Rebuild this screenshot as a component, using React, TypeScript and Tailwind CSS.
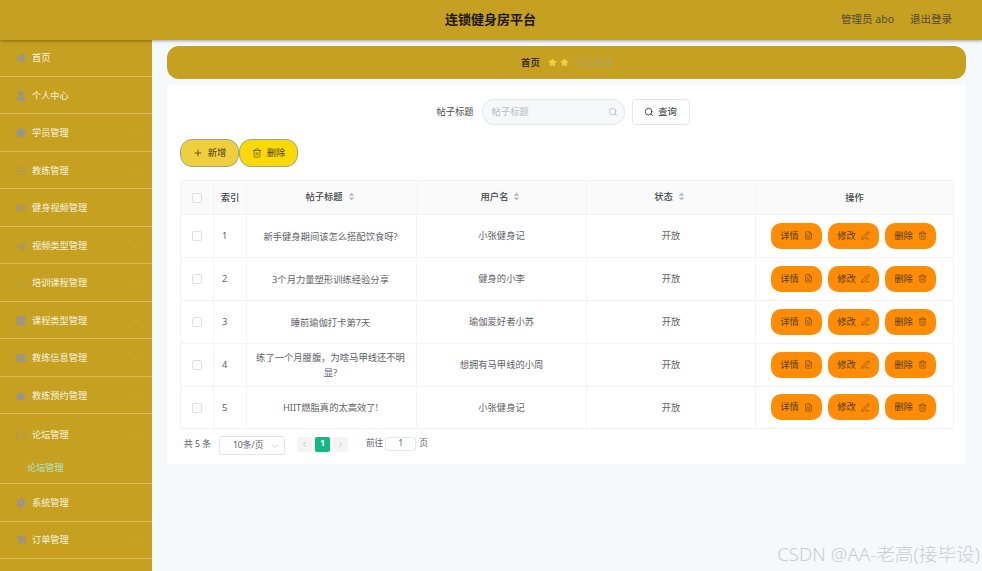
import { Plus, Trash2, Search, ChevronDown, ChevronLeft, ChevronRight, ChevronUp, FileText, PenLine, Star } from 'lucide-react'
import {
  FaHome, FaUser, FaComment, FaBars, FaVideo, FaPaperPlane, FaRegFolder, FaBook, FaIdCard, FaCloud, FaRegCommentDots, FaCog, FaShoppingCart,
} from 'react-icons/fa'

const MENU = [
  { icon: FaHome, label: '首页', tone: 'text-[#98948f]', height: 'h-[36.5px]' },
  { icon: FaUser, label: '个人中心', tone: 'text-[#98948f]', height: 'h-[37.5px] pt-[2px]', arrow: true },
  { icon: FaComment, label: '学员管理', tone: 'text-[#98948f]', height: 'h-[37.5px] pt-[2px]', arrow: true },
  { icon: FaBars, label: '教练管理', tone: 'text-[#b09a4a]', height: 'h-[37.5px] pt-[2px]', arrow: true },
  { icon: FaVideo, label: '健身视频管理', tone: 'text-[#a89a5c]', height: 'h-[37.5px] pt-[2px]', arrow: true },
  { icon: FaPaperPlane, label: '视频类型管理', tone: 'text-[#a89a5c]', height: 'h-[37.5px] pt-[2px]', arrow: true },
  { icon: FaRegFolder, label: '培训课程管理', tone: 'text-[#b8a040]', height: 'h-[37.5px] pt-[2px]', arrow: true },
  { icon: FaBook, label: '课程类型管理', tone: 'text-[#98948f]', height: 'h-[37.5px] pt-[2px]', arrow: true },
  { icon: FaIdCard, label: '教练信息管理', tone: 'text-[#98948f]', height: 'h-[37.5px] pt-[2px]', arrow: true },
  { icon: FaCloud, label: '教练预约管理', tone: 'text-[#98948f]', height: 'h-[37.5px] pt-[2px]', arrow: true },
]

const MENU_BOTTOM = [
  { icon: FaCog, label: '系统管理', arrow: false },
  { icon: FaShoppingCart, label: '订单管理', arrow: true },
]

const ROWS = [
  { id: 1, title: '新手健身期间该怎么搭配饮食呀?', user: '小张健身记' },
  { id: 2, title: '3个月力量塑形训练经验分享', user: '健身的小李' },
  { id: 3, title: '睡前瑜伽打卡第7天', user: '瑜伽爱好者小苏' },
  { id: 4, title: '练了一个月腰腹，为啥马甲线还不明显?', user: '想拥有马甲线的小周' },
  { id: 5, title: 'HIIT燃脂真的太高效了!', user: '小张健身记' },
]

const ROW_HEIGHTS = ['h-[43px]', 'h-[43px]', 'h-[43px]', 'h-[43px]', 'h-[42px]']

function SortIcon() {
  return (
    <svg viewBox="0 0 8 10" className="inline-block w-[7px] h-[9px] ml-[5px] align-[-1px] fill-[#b4b7bd]">
      <path d="M4 0.5 7 4H1z" />
      <path d="M4 9.5 1 6h6z" />
    </svg>
  )
}

function Checkbox({ size = 'w-[10px] h-[10px]' }: { size?: string }) {
  return <span className={`block ${size} mx-auto border border-[#dcdfe6] rounded-[2px] bg-white`} />
}

function ActionButton({ label, icon: Icon }: { label: string; icon: typeof FileText }) {
  return (
    <button className="w-[51px] h-[26px] rounded-[10px] bg-[#ff8c07] text-[#54401f] text-[9.3px] flex items-center justify-center gap-[5px]">
      {label}
      <Icon className="w-[9px] h-[9px]" strokeWidth={1.5} />
    </button>
  )
}

export default function App() {
  return (
    <div
      className="relative w-[982px] h-[571px] overflow-hidden bg-[#f6f9fc] flex flex-col"
      style={{ fontFamily: '"Noto Sans", "Noto Sans CJK SC", sans-serif' }}
    >
      {/* Top bar */}
      <header className="relative z-10 h-10 shrink-0 bg-[#c5a021] shadow-[0_1px_3px_rgba(0,0,0,0.35)] flex items-center pl-[445px] pr-[30px]">
        <h1 className="text-[13px] font-bold text-[#1c1505]">连锁健身房平台</h1>
        <div className="ml-auto flex items-center gap-4 text-[10.5px] text-[#4f4a38]">
          <span>管理员 abo</span>
          <span>退出登录</span>
        </div>
      </header>

      <div className="flex flex-1 min-h-0">
        {/* Sidebar */}
        <aside className="w-[152px] shrink-0 bg-[#c5a021] text-[#fbf5e0] text-[9.2px]">
          {MENU.map(({ icon: Icon, label, tone, height, arrow }) => (
            <div key={label} className={`${height} flex items-center pl-4 pr-3 border-b border-[#d6bc62]`}>
              <Icon className={`w-[10px] h-[10px] mr-[6px] ${tone}`} />
              <span>{label}</span>
              {arrow && <ChevronDown className="ml-auto w-2 h-2 text-[#c9ab3a]" />}
            </div>
          ))}
          <div className="h-[70px] border-b border-[#d6bc62]">
            <div className="h-[41px] flex items-center pl-4 pr-3">
              <FaRegCommentDots className="w-[10px] h-[10px] mr-[6px] text-[#a89a5c]" />
              <span>论坛管理</span>
              <ChevronUp className="ml-auto w-2 h-2 text-[#c9ab3a]" />
            </div>
            <div className="h-[26px] flex items-center pl-[27px] text-[#a8e8c8]">论坛管理</div>
          </div>
          {MENU_BOTTOM.map(({ icon: Icon, label, arrow }) => (
            <div key={label} className="h-[37.5px] pt-[1px] flex items-center pl-4 pr-3 border-b border-[#d6bc62]">
              <Icon className="w-[10px] h-[10px] mr-[6px] text-[#98948f]" />
              <span>{label}</span>
              {arrow && <ChevronDown className="ml-auto w-2 h-2 text-[#c9ab3a]" />}
            </div>
          ))}
        </aside>

        {/* Main */}
        <main className="flex-1 min-w-0 pl-[15px] pr-4 pt-[6px]">
          <div className="h-[33px] rounded-xl bg-[#c5a021] flex items-center justify-center text-[9.3px] pl-[1px]">
            <span className="font-bold text-[#3b3010]">首页</span>
            <Star className="ml-2 w-[9px] h-[9px] fill-[#f0cf45] text-[#f0cf45]" />
            <Star className="ml-[3px] w-[9px] h-[9px] fill-[#f0cf45] text-[#f0cf45]" />
            <span className="ml-[7px] text-[#b3a565]">论坛管理</span>
          </div>

          <section className="mt-[6px] h-[379px] bg-white px-[13px] pt-[14px]">
            {/* Search */}
            <div className="flex items-center justify-center h-[26px] text-[9.3px] pr-[7px]">
              <span className="text-[#4d4d4d] mr-2">帖子标题</span>
              <div className="w-[143px] h-[26px] rounded-xl border border-[#e4e7ed] bg-[#f7f8f9] flex items-center pl-[9px] pr-[6px] text-[#b8bcc4]">
                <span>帖子标题</span>
                <Search className="ml-auto w-[10px] h-[10px]" />
              </div>
              <button className="ml-[7px] w-[58px] h-[26px] rounded-[3px] border border-[#e4e7ed] bg-white flex items-center justify-center gap-1 text-[#303133]">
                <Search className="w-[10px] h-[10px]" />
                查询
              </button>
            </div>

            {/* Toolbar */}
            <div className="mt-[14px] flex text-[9.3px] text-[#4f4418]">
              <button className="w-[59px] h-[28px] rounded-xl border border-[#8fae90] bg-[#efcf3e] flex items-center justify-center gap-[5px]">
                <Plus className="w-[10px] h-[10px]" />
                新增
              </button>
              <button className="w-[59px] h-[28px] rounded-xl border border-[#8fae90] bg-[#fbd809] flex items-center justify-center gap-[5px]">
                <Trash2 className="w-[10px] h-[10px]" strokeWidth={1.5} />
                删除
              </button>
            </div>

            {/* Table */}
            <table className="mt-[13px] w-[773px] table-fixed border-collapse text-[9.3px] text-[#5f6266]">
              <colgroup>
                <col className="w-[33px]" />
                <col className="w-[33px]" />
                <col className="w-[170px]" />
                <col className="w-[170px]" />
                <col className="w-[169px]" />
                <col className="w-[198px]" />
              </colgroup>
              <thead>
                <tr className="h-[34px] bg-[#fafafa] text-[#45474b]">
                  <th className="border border-[#f3f4f6]"><Checkbox /></th>
                  <th className="border border-[#f3f4f6] font-medium">索引</th>
                  <th className="border border-[#f3f4f6] font-medium pb-[2px] pr-[3px]">帖子标题<SortIcon /></th>
                  <th className="border border-[#f3f4f6] font-medium pb-[2px] pr-[2px]">用户名<SortIcon /></th>
                  <th className="border border-[#f3f4f6] font-medium pb-[2px] pr-[3px]">状态<SortIcon /></th>
                  <th className="border border-[#f3f4f6] font-medium">操作</th>
                </tr>
              </thead>
              <tbody>
                {ROWS.map((row, i) => (
                  <tr key={row.id} className={ROW_HEIGHTS[i]}>
                    <td className="border border-[#f3f4f6]"><Checkbox /></td>
                    <td className="border border-[#f3f4f6] pl-[8px]">{row.id}</td>
                    <td className="border border-[#f3f4f6] text-center pl-[9px] pr-[11px] leading-[15px]">{row.title}</td>
                    <td className="border border-[#f3f4f6] text-center">{row.user}</td>
                    <td className="border border-[#f3f4f6] text-center">开放</td>
                    <td className="border border-[#f3f4f6]">
                      <div className="flex justify-center gap-[6px] pr-[2px] pb-[1px]">
                        <ActionButton label="详情" icon={FileText} />
                        <ActionButton label="修改" icon={PenLine} />
                        <ActionButton label="删除" icon={Trash2} />
                      </div>
                    </td>
                  </tr>
                ))}
              </tbody>
            </table>

            {/* Pagination */}
            <div className="mt-[7px] flex items-center text-[8.7px] text-[#606266] pl-[4px]">
              <span className="-mt-[2px]">共 5 条</span>
              <div className="ml-[8px] w-[66px] h-[19px] border border-[#e4e7ed] rounded-[2px] flex items-center pl-[13px] pr-[4px]">
                10条/页
                <ChevronDown className="ml-auto w-[10px] h-[10px] text-[#c0c4cc]" />
              </div>
              <div className="ml-[12px] flex gap-[3px] -mt-[3px]">
                <span className="w-[15px] h-[15px] rounded-[2px] bg-[#f4f4f5] flex items-center justify-center text-[#b4b7bd]"><ChevronLeft className="w-[9px] h-[9px]" /></span>
                <span className="w-[15px] h-[15px] rounded-[2px] bg-[#12b886] flex items-center justify-center font-bold text-white">1</span>
                <span className="w-[15px] h-[15px] rounded-[2px] bg-[#f4f4f5] flex items-center justify-center text-[#b4b7bd]"><ChevronRight className="w-[9px] h-[9px]" /></span>
              </div>
              <span className="ml-[18px] -mt-[3px]">前往</span>
              <span className="ml-[2px] -mt-[3px] w-[31px] h-[14px] border border-[#e4e7ed] rounded-[2px] flex items-center justify-center">1</span>
              <span className="ml-[3px] -mt-[3px]">页</span>
            </div>
          </section>
        </main>
      </div>

      {/* CSDN watermark */}
      <span className="absolute right-[2px] bottom-[5px] text-[18.7px] leading-[24px] font-light text-[#cacccf]">
        CSDN @AA-老高(接毕设)
      </span>
    </div>
  )
}
